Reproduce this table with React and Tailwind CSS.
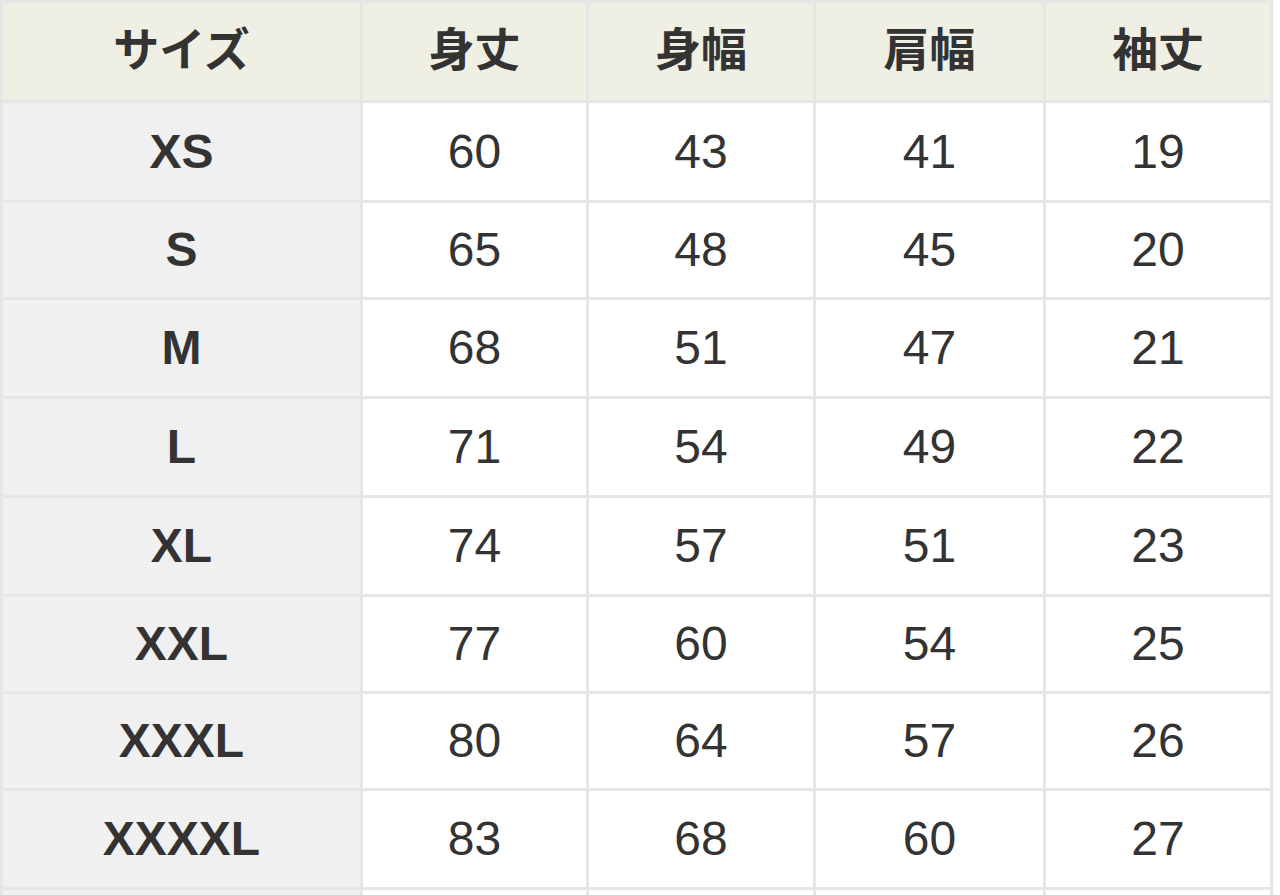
import React from "react";

const rows = [
  ["XS", 60, 43, 41, 19, "h-[97px]"],
  ["S", 65, 48, 45, 20, "h-[94px]"],
  ["M", 68, 51, 47, 21, "h-[96px]"],
  ["L", 71, 54, 49, 22, "h-[96px]"],
  ["XL", 74, 57, 51, 23, "h-[96px]"],
  ["XXL", 77, 60, 54, 25, "h-[94px]"],
  ["XXXL", 80, 64, 57, 26, "h-[94px]"],
  ["XXXXL", 83, 68, 60, 27, "h-[96px]"],
];

const font = { fontFamily: '"Liberation Sans", "Noto Sans CJK JP", Arial, sans-serif' };

export default function App() {
  const headers = ["サイズ", "身丈", "身幅", "肩幅", "袖丈"];
  return (
    <div className="w-[1280px] h-[895px] overflow-hidden bg-white" style={font}>
      <div className="w-[1273px] bg-[#e6e6e6] p-[3px] pb-0 grid grid-cols-[357px_223px_224px_227px_224px] gap-[3px] text-[#333333]">
        {headers.map((h) => (
          <div
            key={h}
            className="h-[97px] bg-[#efefe3] flex items-center justify-center pb-[10px] text-[46px] font-bold"
            style={{ fontFamily: '"Noto Sans CJK JP", sans-serif' }}
          >
            {h}
          </div>
        ))}
        {rows.map((r) => (
          <React.Fragment key={r[0]}>
            <div className={`${r[5]} bg-[#f0f0f0] flex items-center justify-center text-[48px] font-bold`}>
              {r[0]}
            </div>
            {r.slice(1, 5).map((v, i) => (
              <div key={i} className={`${r[5]} bg-white flex items-center justify-center text-[48px]`}>
                {v}
              </div>
            ))}
          </React.Fragment>
        ))}
        <div className="h-[20px] bg-[#f0f0f0]" />
        <div className="h-[20px] bg-white" />
        <div className="h-[20px] bg-white" />
        <div className="h-[20px] bg-white" />
        <div className="h-[20px] bg-white" />
      </div>
    </div>
  );
}
